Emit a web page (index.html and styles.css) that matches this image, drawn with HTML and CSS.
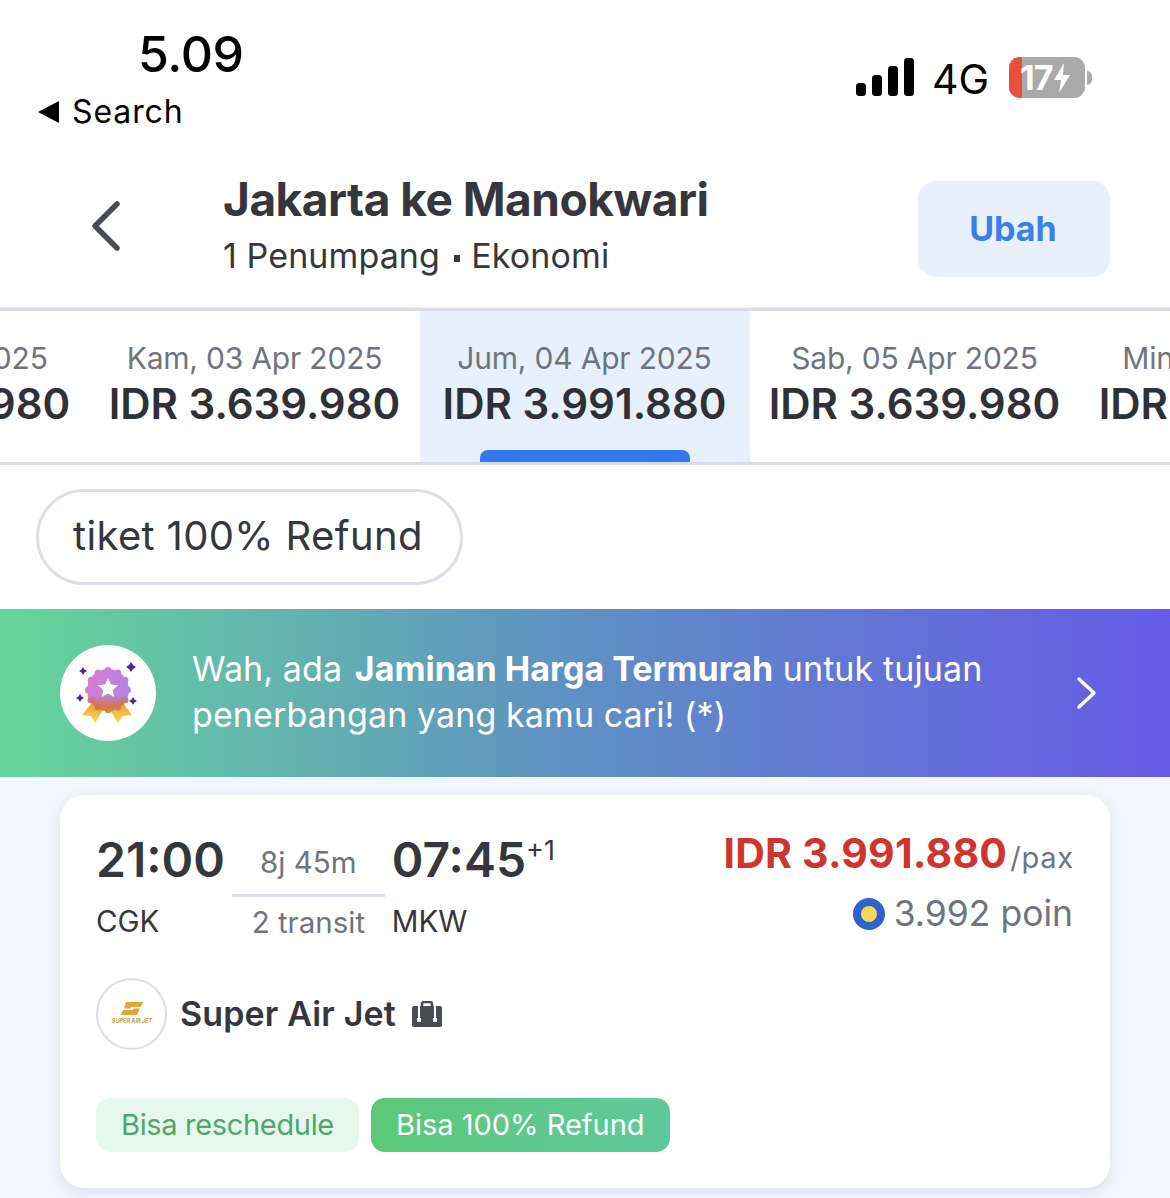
FILE: index.html
```html
<!DOCTYPE html>
<html lang="id">

<head>
    <meta charset="UTF-8">
    <meta name="viewport" content="width=device-width, initial-scale=1.0">
    <title>Jakarta ke Manokwari</title>
    <link rel="stylesheet" href="styles.css">
</head>

<body>

    <div class="statusBar">
        <div class="statusLeft">
            <div class="clock">5.09</div>
            <div class="backSearch"><span class="backTriangle"></span>Search</div>
        </div>
        <div class="statusRight">
            <svg class="signal" width="58" height="38" viewBox="0 0 58 38">
                <rect x="0" y="25" width="10" height="13" rx="3.5" fill="#000"/>
                <rect x="16" y="17" width="10" height="21" rx="3.5" fill="#000"/>
                <rect x="32" y="8" width="10" height="30" rx="3.5" fill="#000"/>
                <rect x="48" y="0" width="10" height="38" rx="3.5" fill="#000"/>
            </svg>
            <span class="network">4G</span>
            <div class="battery">
                <div class="batteryLow"></div>
                <span class="batteryText">17</span>
                <svg class="bolt" width="18" height="30" viewBox="0 0 18 30">
                    <path d="M11 0 L1 17 H8 L6 30 L17 12 H10 Z" fill="#fff"/>
                </svg>
            </div>
            <div class="batteryCap"></div>
        </div>
    </div>

    <div class="header">
        <svg class="backArrow" width="32" height="52" viewBox="0 0 32 52">
            <path d="M27 4 L5 26 L27 48" fill="none" stroke="#4a4c53" stroke-width="5.5" stroke-linecap="round" stroke-linejoin="round"/>
        </svg>
        <div class="routeInfo">
            <div class="routeTitle">Jakarta ke Manokwari</div>
            <div class="routeSub">1 Penumpang <span class="dot"></span> Ekonomi</div>
        </div>
        <button class="changeButton">Ubah</button>
    </div>

    <div class="dateStrip">
        <div class="dateItem">
            <div class="dateLabel">Rab, 02 Apr 2025</div>
            <div class="datePrice">IDR 3.639.980</div>
        </div>
        <div class="dateItem">
            <div class="dateLabel">Kam, 03 Apr 2025</div>
            <div class="datePrice">IDR 3.639.980</div>
        </div>
        <div class="dateItem active">
            <div class="dateLabel">Jum, 04 Apr 2025</div>
            <div class="datePrice">IDR 3.991.880</div>
            <div class="activeBar"></div>
        </div>
        <div class="dateItem">
            <div class="dateLabel">Sab, 05 Apr 2025</div>
            <div class="datePrice">IDR 3.639.980</div>
        </div>
        <div class="dateItem">
            <div class="dateLabel">Min, 06 Apr 2025</div>
            <div class="datePrice">IDR 3.639.980</div>
        </div>
    </div>

    <div class="filterRow">
        <div class="filterChip">tiket 100% Refund</div>
    </div>

    <div class="promoBanner">
        <svg class="promoBadge" width="96" height="96" viewBox="0 0 96 96">
            <defs>
                <linearGradient id="rosette" gradientUnits="userSpaceOnUse" x1="26" y1="30" x2="70" y2="50">
                    <stop offset="0" stop-color="#dc7ccf"/>
                    <stop offset="1" stop-color="#ab86e6"/>
                </linearGradient>
                <linearGradient id="rosetteLow" gradientUnits="userSpaceOnUse" x1="0" y1="50" x2="0" y2="66">
                    <stop offset="0" stop-color="#d2744a" stop-opacity="0"/>
                    <stop offset="0.7" stop-color="#d2744a"/>
                    <stop offset="1" stop-color="#dd8a3a"/>
                </linearGradient>
                <linearGradient id="ribbon" gradientUnits="userSpaceOnUse" x1="0" y1="58" x2="0" y2="78">
                    <stop offset="0" stop-color="#e8a030"/>
                    <stop offset="1" stop-color="#fbdc55"/>
                </linearGradient>
                <g id="scallop">
                    <circle cx="48" cy="45" r="21"/>
                    <circle cx="48" cy="25.500" r="3.500"/>
                    <circle cx="57.800" cy="28.100" r="3.500"/>
                    <circle cx="64.900" cy="35.200" r="3.500"/>
                    <circle cx="67.500" cy="45" r="3.500"/>
                    <circle cx="64.900" cy="54.800" r="3.500"/>
                    <circle cx="57.800" cy="61.900" r="3.500"/>
                    <circle cx="48" cy="64.500" r="3.500"/>
                    <circle cx="38.200" cy="61.900" r="3.500"/>
                    <circle cx="31.100" cy="54.800" r="3.500"/>
                    <circle cx="28.500" cy="45" r="3.500"/>
                    <circle cx="31.100" cy="35.200" r="3.500"/>
                    <circle cx="38.200" cy="28.100" r="3.500"/>
                </g>
            </defs>
            <path d="M32 58 L22 70 L31 71 L35 78 L43 65 L47 63 L50 65 L58 78 L63 71 L72 70 L63 58 Z" fill="url(#ribbon)"/>
            <use href="#scallop" fill="url(#rosette)"/>
            <use href="#scallop" fill="url(#rosetteLow)"/>
            <path d="M48 33 L51 39.500 L58 40.200 L52.800 45 L54.200 52 L48 48.500 L41.800 52 L43.200 45 L38 40.200 L45 39.500 Z" fill="#fff"/>
            <path d="M23 22 L24.500 24.500 L27 26 L24.500 27.500 L23 30 L21.500 27.500 L19 26 L21.500 24.500 Z" fill="#55209a"/>
            <path d="M71 17 L73 20 L76 22 L73 24 L71 27 L69 24 L66 22 L69 20 Z" fill="#55209a"/>
            <path d="M20 49 L21.500 51.500 L24 53 L21.500 54.500 L20 57 L18.500 54.500 L16 53 L18.500 51.500 Z" fill="#55209a"/>
            <path d="M73 52 L74.500 54.500 L77 56 L74.500 57.500 L73 60 L71.500 57.500 L69 56 L71.500 54.500 Z" fill="#55209a"/>
        </svg>
        <div class="promoText">Wah, ada <b>Jaminan Harga Termurah</b> untuk tujuan<br>penerbangan yang kamu cari! (*)</div>
        <svg class="promoArrow" width="22" height="34" viewBox="0 0 22 34">
            <path d="M3 3 L18 17 L3 31" fill="none" stroke="#fff" stroke-width="3.500" stroke-linecap="round" stroke-linejoin="round"/>
        </svg>
    </div>

    <div class="resultList">
        <div class="flightCard">
            <div class="flightTop">
                <div class="flightTimes">
                    <div class="timeCol">
                        <div class="timeValue">21:00</div>
                        <div class="airport">CGK</div>
                    </div>
                    <div class="durationCol">
                        <div class="duration">8j 45m</div>
                        <div class="transit">2 transit</div>
                    </div>
                    <div class="timeCol">
                        <div class="timeValue">07:45<sup class="plusDay">+1</sup></div>
                        <div class="airport">MKW</div>
                    </div>
                </div>
                <div class="priceCol">
                    <div class="priceLine"><span class="price">IDR 3.991.880</span><span class="perPax">/pax</span></div>
                    <div class="points"><span class="pointIcon"></span>3.992 poin</div>
                </div>
            </div>

            <div class="airlineRow">
                <div class="airlineLogo">
                    <svg width="50" height="28" viewBox="0 0 50 28">
                        <path d="M19 2 H36 L34 7 H24 L23.300 8.500 H33 L30 15 H14 L16 10 H26 L26.700 8.500 H17 Z" fill="#e2a53a"/>
                        <text class="logoText" x="25" y="23">SUPER AIR JET</text>
                    </svg>
                </div>
                <span class="airlineName">Super Air Jet</span>
                <svg class="bagIcon" width="30" height="26" viewBox="0 0 30 26">
                    <path d="M10 6 V3 Q10 1 12 1 H18 Q20 1 20 3 V6" fill="none" stroke="#4a4c53" stroke-width="2.500"/>
                    <rect x="0" y="5" width="30" height="21" rx="2" fill="#4a4c53"/>
                    <rect x="6" y="5" width="2" height="13" fill="#fff"/>
                    <rect x="22" y="5" width="2" height="13" fill="#fff"/>
                    <rect x="5" y="17" width="4" height="4" fill="#fff"/>
                    <rect x="21" y="17" width="4" height="4" fill="#fff"/>
                </svg>
            </div>

            <div class="tagRow">
                <span class="tag tagLight">Bisa reschedule</span>
                <span class="tag tagSolid">Bisa 100% Refund</span>
            </div>
        </div>
    </div>

</body>

</html>
```

FILE: styles.css
```css
* {
    box-sizing: border-box;
}

html,
body {
    height: 100%;
}

body {
    margin: 0;
    background-color: #f3f6fd;
    font-family: "Inter", "Liberation Sans", sans-serif;
    color: #35373d;
    overflow: hidden;
}

.statusBar {
    height: 150px;
    background-color: #fff;
    display: flex;
    justify-content: space-between;
    padding: 27px 78px 0 38px;
    color: #000;
}

.clock {
    font-size: 50px;
    line-height: 54px;
    font-weight: 500;
    margin-left: 100px;
    letter-spacing: -0.4px;
}

.backSearch {
    display: flex;
    align-items: center;
    font-size: 32px;
    line-height: 40px;
    margin-top: 11px;
    letter-spacing: 0.9px;
}

.backTriangle {
    width: 0;
    height: 0;
    border-top: 11px solid transparent;
    border-bottom: 11px solid transparent;
    border-right: 21px solid #000;
    margin-right: 13px;
}

.statusRight {
    display: flex;
    align-items: flex-start;
    padding-top: 31px;
}

.signal {
    margin-right: 18px;
}

.network {
    font-size: 41px;
    line-height: 44px;
    margin-top: -1px;
    margin-right: 20px;
}

.battery {
    position: relative;
    width: 76px;
    height: 41px;
    border-radius: 11px;
    background-color: #aaaaaa;
    overflow: hidden;
    display: flex;
    align-items: center;
    padding-left: 11px;
    margin-top: -1px;
}

.batteryLow {
    position: absolute;
    left: 0;
    top: 0;
    width: 13px;
    height: 100%;
    background-color: #e9503c;
}

.batteryText {
    position: relative;
    color: #fff;
    font-size: 34px;
    font-weight: 700;
    letter-spacing: -1px;
}

.bolt {
    margin-left: 1px;
}

.batteryCap {
    width: 5px;
    height: 14px;
    margin-top: 13px;
    margin-left: 2px;
    background-color: #aaaaaa;
    border-radius: 0 7px 7px 0;
}

.header {
    height: 158px;
    background-color: #fff;
    display: flex;
    align-items: flex-start;
    padding: 19px 60px 0 90px;
    border-bottom: 1px solid #f2f3f7;
}

.backArrow {
    margin-top: 31px;
}

.routeInfo {
    margin-left: 101px;
    flex: 1;
}

.routeTitle {
    font-size: 46px;
    line-height: 60px;
    font-weight: 700;
    letter-spacing: -0.5px;
    color: #35373d;
}

.routeSub {
    font-size: 34px;
    line-height: 46px;
    margin-top: 4px;
    letter-spacing: 0.1px;
    color: #35373d;
}

.dot {
    display: inline-block;
    width: 6px;
    height: 7px;
    background-color: #35373d;
    vertical-align: middle;
    margin: 0 2px 0 4px;
}

.changeButton {
    width: 192px;
    height: 96px;
    margin-top: 12px;
    padding: 0 2px 2px 0;
    border: none;
    border-radius: 18px;
    background-color: #e8f0fc;
    color: #3b7fe8;
    font-family: inherit;
    font-size: 34px;
    font-weight: 700;
}

.dateStrip {
    height: 157px;
    background-color: #fff;
    border-top: 3px solid #d9dce8;
    border-bottom: 3px solid #d9dce8;
    display: flex;
    overflow: hidden;
}

.dateItem {
    flex: 0 0 330px;
    position: relative;
    text-align: center;
    padding: 28px 1px 0 0;
    white-space: nowrap;
}

.dateItem:first-child {
    margin-left: -240px;
}

.dateItem.active {
    background-color: #e8f0fb;
}

.dateLabel {
    font-size: 30px;
    line-height: 38px;
    letter-spacing: -0.2px;
    color: #6f747e;
}

.datePrice {
    font-size: 42px;
    line-height: 52px;
    font-weight: 600;
    color: #2f3136;
    margin-top: 1px;
}

.activeBar {
    position: absolute;
    left: 60px;
    right: 60px;
    bottom: 0;
    height: 12px;
    background-color: #3479ee;
    border-radius: 8px 8px 0 0;
}

.filterRow {
    background-color: #fff;
    padding: 24px 36px;
    height: 144px;
}

.filterChip {
    display: inline-block;
    height: 96px;
    width: 427px;
    padding-left: 34px;
    border: 3px solid #dcdfea;
    border-radius: 48px;
    font-size: 40px;
    line-height: 88px;
    letter-spacing: 0.35px;
    color: #35373d;
}

.promoBanner {
    height: 168px;
    display: flex;
    align-items: center;
    padding: 0 72px 0 60px;
    background: linear-gradient(90deg, #66d69a 0%, #5f8fc4 50%, #665ae6 100%);
    color: #fff;
}

.promoBadge {
    border-radius: 50%;
    background-color: #fff;
    flex-shrink: 0;
}

.promoText {
    flex: 1;
    margin: -2px 0 0 36px;
    font-size: 34px;
    line-height: 46px;
    letter-spacing: 0.1px;
}

.promoText b {
    font-weight: 700;
    letter-spacing: 0;
    margin-left: 3px;
}

.resultList {
    padding: 18px 60px 0;
}

.flightCard {
    height: 393px;
    background-color: #fff;
    border-radius: 24px;
    padding: 33px 36px 0;
    box-shadow: 0 4px 14px rgba(90, 100, 140, 0.14);
}

.flightTop {
    display: flex;
    justify-content: space-between;
    height: 115px;
}

.flightTimes {
    display: flex;
}

.timeValue {
    font-size: 48px;
    line-height: 64px;
    font-weight: 600;
    color: #35373d;
}

.plusDay {
    font-size: 27px;
    line-height: 0;
    font-weight: 400;
}

.airport {
    font-size: 29.5px;
    line-height: 38px;
    margin-top: 10px;
    color: #35373d;
}

.durationCol {
    width: 153px;
    margin: 0 7px;
    text-align: center;
    color: #6f747e;
    font-size: 29.5px;
}

.duration {
    height: 69px;
    line-height: 68px;
    border-bottom: 3px solid #dcdfea;
}

.transit {
    line-height: 38px;
    margin-top: 6px;
}

.priceCol {
    text-align: right;
}

.priceLine {
    height: 54px;
    line-height: 50px;
}

.price {
    font-size: 41px;
    font-weight: 700;
    letter-spacing: 0.2px;
    color: #d0342f;
}

.perPax {
    font-size: 29px;
    letter-spacing: 0.8px;
    color: #6f747e;
    margin-left: 3px;
}

.points {
    display: flex;
    align-items: center;
    justify-content: flex-end;
    font-size: 35.5px;
    line-height: 46px;
    margin-top: 9px;
    padding-right: 1px;
    color: #6f747e;
}

.pointIcon {
    width: 32px;
    height: 32px;
    margin-right: 9px;
    border-radius: 50%;
    background-color: #f7d75c;
    border: 8px solid #2f62cc;
}

.airlineRow {
    display: flex;
    align-items: center;
    margin-top: 35px;
}

.airlineLogo {
    width: 71px;
    height: 72px;
    border: 2px solid #dcdfea;
    border-radius: 50%;
    display: flex;
    align-items: center;
    justify-content: center;
}

.logoText {
    font-size: 5.5px;
    font-weight: 700;
    font-style: italic;
    text-anchor: middle;
    fill: #c9a04a;
}

.airlineName {
    font-size: 34px;
    font-weight: 600;
    letter-spacing: 0.15px;
    line-height: 40px;
    margin-left: 13px;
    color: #35373d;
}

.bagIcon {
    margin-left: 16px;
}

.tagRow {
    display: flex;
    gap: 12px;
    margin-top: 48px;
}

.tag {
    height: 54px;
    line-height: 54px;
    font-size: 29px;
    border-radius: 14px;
    padding: 0 25px;
}

.tagLight {
    background-color: #e6f8ee;
    color: #4fa868;
    letter-spacing: -0.33px;
}

.tagSolid {
    background: linear-gradient(90deg, #5cc878, #5fc99c);
    color: #fff;
}
```
